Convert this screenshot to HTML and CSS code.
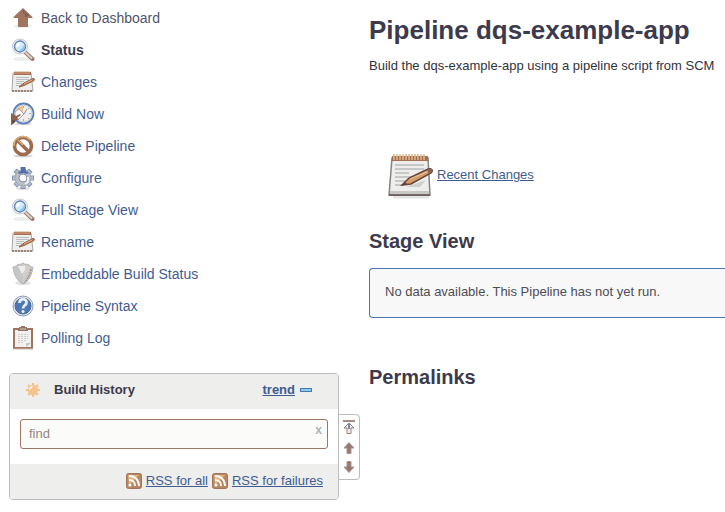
FILE: index.html
```
<!DOCTYPE html>
<html lang="en">
<head>
<meta charset="utf-8">
<meta name="viewport" content="width=device-width, initial-scale=1">
<title>dqs-example-app</title>
<link rel="stylesheet" href="styles.css">
</head>
<body>
<svg class="sprites" aria-hidden="true">
  <defs>
    <symbol id="search" viewBox="0 0 24 24">
      <ellipse cx="12" cy="21" rx="10" ry="2" fill="#eeeeec"/>
      <path d="M14.500 14.500l7 6.500" stroke="#957b72" stroke-width="4" stroke-linecap="round"/>
      <path d="M14 14l7 6.500" stroke="#d9d2ce" stroke-width="2"/>
      <circle cx="9" cy="8.500" r="7.500" fill="#f4f4f4" stroke="#c3c7ca"/>
      <circle cx="9" cy="8.500" r="5.500" fill="#cdeafb" stroke="#5d80bb" stroke-width="1.300"/>
      <path d="M5 9c0-3 2-5 5-5-1 3-2 5-5 5z" fill="#fff"/>
      <path d="M9 12c2 0 4-1 4-4" stroke="#78c2ec" stroke-width="1.500" fill="none"/>
    </symbol>
    <symbol id="notepad" viewBox="0 0 48 48">
      <path d="M6 46h36" stroke="#e4e4e4" stroke-width="3"/>
      <path d="M5 7h36l2 37H2z" fill="#eeeeec" stroke="#858483" stroke-width="1.500"/>
      <path d="M3 40h39v4H3z" fill="#c9c7c5"/>
      <path d="M2 44h41" stroke="#5c4b4b" stroke-width="1.500"/>
      <path d="M5 5h36v5H5z" fill="#a36f56"/>
      <path d="M7 3v6m3-6v6m3-6v6m3-6v6m3-6v6m3-6v6m3-6v6m3-6v6m3-6v6m3-6v6m3-6v6" stroke="#e3b586" stroke-width="1.500"/>
      <path d="M8 14h29M8 18h29M8 22h14M8 26h23M8 30h12M8 34h9" stroke="#b9babb" stroke-width="1.400"/>
      <path d="M19 36h14l6-7z" fill="#cfcfcd"/>
      <path d="M15 34l7-7 19-9c3-1 6 1 3 4L24 33z" fill="#d69b67" stroke="#65443e" stroke-width="1.500"/>
      <path d="M23 28l19-8" stroke="#f1c796"/>
      <path d="M14 35l4-4 2 2z" fill="#65443e"/>
      <path d="M40 19l2 4 3-2c1-3-1-4-3-3z" fill="#8a6155"/>
    </symbol>
    <symbol id="notepad-small" viewBox="0 0 24 24">
      <path d="M2 3h18l2 18H1z" fill="#eeeeec" stroke="#a5a5a4"/>
      <path d="M1 21h21" stroke="#936c5b" stroke-width="1.500" stroke-dasharray="2 1"/>
      <path d="M3 2h17v3H3z" fill="#a36f56"/>
      <path d="M4 1v3m2-3v3m2-3v3m2-3v3m2-3v3m2-3v3m2-3v3m2-3v3" stroke="#d8a778"/>
      <path d="M5 7.500h13M5 9.500h13M5 11.500h8M5 13.500h6M5 15.500h4" stroke="#bdbebe"/>
      <path d="M8 17l5-4 9-4.500c2 0 2 1.500 1 2L13 15.500z" fill="#bd8057" stroke="#8b5c47"/>
      <path d="M13 14l8-4" stroke="#e5b17f"/>
    </symbol>
    <symbol id="rss" viewBox="0 0 16 16">
      <rect x=".5" y=".5" width="15" height="15" rx="2" fill="#b88761" stroke="#a1745f"/>
      <path d="M2 2h11L3 12z" fill="#e7b47e"/>
      <circle cx="4" cy="12" r="1.600" fill="#fff"/>
      <path d="M3 7c4 0 6 2 6 6M3 3c6 0 10 4 10 10" fill="none" stroke="#fff" stroke-width="1.800"/>
    </symbol>
    <symbol id="arrow" viewBox="0 0 12 12">
      <path d="M6 .5L11 6H8v5.500H4V6H1z" fill="#9d7664" stroke="#a5958f"/>
      <path d="M6 2v9" stroke="#6e7ca6" stroke-width="2" stroke-dasharray="1 2"/>
    </symbol>
  </defs>
</svg>

<div class="page">
  <aside class="sidebar">
    <nav class="tasks">
      <a class="task" href="#">
        <svg class="icon" viewBox="0 0 24 24"><ellipse cx="12" cy="20" rx="9" ry="2" fill="#eee"/><path d="M12 2l9.500 9v1H17v9H7v-9H2.500v-1z" fill="#a0745f"/><path d="M12 4l6 6M12 6l4 4M14 10h3" fill="none" stroke="#604f50" stroke-dasharray="2 1"/></svg>
        <span class="home">Back to Dashboard</span>
      </a>
      <a class="task current" href="#"><svg class="icon"><use href="#search"/></svg><span>Status</span></a>
      <a class="task" href="#"><svg class="icon"><use href="#notepad-small"/></svg><span>Changes</span></a>
      <a class="task" href="#">
        <svg class="icon" viewBox="0 0 24 24"><ellipse cx="12" cy="22" rx="9" ry="1.500" fill="#ddd"/><circle cx="12.500" cy="11.500" r="10" fill="#eeeeec" stroke="#5c7fb8" stroke-width="1.800"/><circle cx="12.500" cy="11.500" r="8.500" fill="none" stroke="#c3c8cc"/><path d="M12 4v7H4c1-4 4-7 8-7z" fill="#f1c18b"/><path d="M12.500 4v2M20 11.500h-2M12.500 19v-2M18 6l-1 1M18 17l-1-1M7 6l1 1" stroke="#a5abb8"/><path d="M4 10l4-3 5 5-6 6-3-2z" fill="#fff" stroke="#aaa8a5"/><path d="M13 12l3-5" stroke="#8b8fa5"/><path d="M0 11l5 3 4-2 1 1-4 3 2 1-4 2-3 4H0z" fill="#8c624e"/><path d="M1 18l4 1-3 3z" fill="#51434a"/></svg>
        <span>Build Now</span>
      </a>
      <a class="task" href="#">
        <svg class="icon" viewBox="0 0 24 24"><ellipse cx="12" cy="22" rx="10" ry="1.500" fill="#d6d6d6"/><circle cx="12" cy="12" r="8.500" fill="#fff" stroke="#9c6c51" stroke-width="3.600"/><path d="M6 6l12 12" stroke="#9c6c51" stroke-width="3.600"/><path d="M3 12a9 9 0 0 1 16-6M7 6l5 5" fill="none" stroke="#e1b184" stroke-width="1.300"/></svg>
        <span>Delete Pipeline</span>
      </a>
      <a class="task" href="#">
        <svg class="icon" viewBox="0 0 24 24">
          <ellipse cx="12" cy="22.500" rx="7" ry="1.500" fill="#ddd"/>
          <path d="M12 1v22M1 12h22M4.200 4.200l15.600 15.600M19.800 4.200L4.200 19.800" stroke="#7d92b5" stroke-width="5"/>
          <path d="M12 2v20M2 12h20M5 5l14 14M19 5L5 19" stroke="#bcc0c6" stroke-width="3.400"/>
          <circle cx="12" cy="12" r="8" fill="#bcc0c6" stroke="#8999b3" stroke-width=".6"/>
          <path d="M10 1h4l1 4 3 2-2 1-4-1-4 1-1-2 3-1z" fill="#4f70ab"/>
          <circle cx="12" cy="12" r="4" fill="#fff" stroke="#8191ac"/>
          <path d="M17 11v5l-3 2" fill="none" stroke="#eee" stroke-width="2"/>
        </svg>
        <span>Configure</span>
      </a>
      <a class="task" href="#"><svg class="icon"><use href="#search"/></svg><span>Full Stage View</span></a>
      <a class="task" href="#"><svg class="icon"><use href="#notepad-small"/></svg><span>Rename</span></a>
      <a class="task" href="#">
        <svg class="icon" viewBox="0 0 24 24"><ellipse cx="12" cy="21" rx="8" ry="2" fill="#e1e1e1"/><path d="M2 5c3 0 4-2 5-3 2 1 3 0 5-1 2 1 3 2 5 1 1 1 2 3 5 3-1 8-4 14-10 17C6 19 3 13 2 5z" fill="#c5c6c5" stroke="#b5b6b5"/><path d="M12 2c2 1 4 2 5 1l2 3c-2 5-4 9-7 13z" fill="#d0d0ce"/><path d="M7 4h7v4l-3 4z" fill="#eeeeec"/><path d="M20 7c-1 6-3 10-7 14" fill="none" stroke="#a17e70" stroke-dasharray="2 1"/></svg>
        <span>Embeddable Build Status</span>
      </a>
      <a class="task" href="#">
        <svg class="icon" viewBox="0 0 24 24"><circle cx="12" cy="12" r="10" fill="#eee" stroke="#8b9bb6"/><circle cx="12" cy="12" r="8" fill="#4f76b6" stroke="#4468a4"/><path d="M8.500 9c0-5 7-5 7-.5 0 3-3.500 2.500-3.500 6" fill="none" stroke="#e8f2f8" stroke-width="2.800"/><circle cx="12" cy="17.500" r="1.600" fill="#e8f2f8"/></svg>
        <span>Pipeline Syntax</span>
      </a>
      <a class="task" href="#">
        <svg class="icon" viewBox="0 0 24 24"><path d="M2 2h20v21H2z" fill="#a1745f"/><path d="M4 4h16v17H4z" fill="#f1f1ef"/><path d="M8 3V1h2V0h4v1h2v2h1v2H7V3z" fill="#977469"/><path d="M9 3h6" stroke="#c9c4be"/><path d="M7 8.500h10M7 10.500h10M7 12.500h10M7 14.500h9M7 16.500h6" stroke="#ccc" stroke-dasharray="2 1"/><path d="M15 21v-4h5z" fill="#c9c5c1"/><path d="M2 23h20" stroke="#c7bcb5"/></svg>
        <span>Polling Log</span>
      </a>
    </nav>

    <section class="history">
      <header class="history-head">
        <svg class="sun" viewBox="0 0 16 16"><path d="M8 1v14M1 8h14M3 3l10 10M13 3L3 13" stroke="#f2c28b" stroke-width="2"/><circle cx="8" cy="8" r="5.200" fill="#f3c48e"/><path d="M4 8c0-3 2-4 4-4-1 2-2 3-4 4z" fill="#fff"/></svg>
        <h2 class="history-title">Build History</h2>
        <a class="trend" href="#">trend</a>
        <button class="collapse" type="button" aria-label="Collapse"></button>
      </header>
      <form class="search">
        <input class="find" type="text" placeholder="find" aria-label="find">
        <button class="clear" type="button">x</button>
      </form>
      <footer class="feeds">
        <svg class="rss"><use href="#rss"/></svg>
        <a href="#">RSS for all</a>
        <svg class="rss"><use href="#rss"/></svg>
        <a href="#">RSS for failures</a>
      </footer>
      <div class="pager">
        <button type="button" aria-label="Newest builds"><svg class="top" viewBox="0 0 12 14"><path d="M0 1h12" stroke="#a58c83" stroke-width="2"/><path d="M6 3l5 5H8v5.500H4V8H1z" fill="#eee" stroke="#9a7e77"/><path d="M6 4v5" stroke="#7585ac" stroke-width="2"/></svg></button>
        <button type="button" aria-label="Newer builds"><svg class="arrow"><use href="#arrow"/></svg></button>
        <button type="button" aria-label="Older builds"><svg class="arrow down"><use href="#arrow"/></svg></button>
      </div>
    </section>
  </aside>

  <main class="main">
    <h1>Pipeline dqs-example-app</h1>
    <p class="description">Build the dqs-example-app using a pipeline script from SCM</p>
    <div class="recent">
      <svg class="recent-icon"><use href="#notepad"/></svg>
      <a href="#">Recent Changes</a>
    </div>
    <h2>Stage View</h2>
    <div class="notice">No data available. This Pipeline has not yet run.</div>
    <h2>Permalinks</h2>
  </main>
</div>
</body>
</html>
```
FILE: styles.css
```
* {
  box-sizing: border-box;
}

body {
  margin: 0;
  background: #fff;
  color: #3d3a4b;
  font: 13px/20px "Liberation Sans", Arial, sans-serif;
}

a {
  color: #3f5c92;
}

button {
  padding: 0;
  border: 0;
  background: none;
}

svg {
  display: block;
  flex: none;
}

.sprites {
  position: absolute;
  width: 0;
  height: 0;
}

.page {
  display: flex;
  gap: 30px;
  padding: 2px 0 12px 9px;
}

.sidebar {
  flex: 0 0 330px;
}

.tasks {
  display: flex;
  flex-direction: column;
  padding-left: 2px;
}

.task {
  display: flex;
  align-items: center;
  gap: 6px;
  height: 32px;
  font-size: 14px;
  text-decoration: none;
}

.home {
  color: #505468;
}

.current {
  color: #3d3a4b;
  font-weight: bold;
}

.icon {
  width: 24px;
  height: 24px;
}

.history {
  position: relative;
  margin-top: 19px;
  border: 1px solid #bbb;
  border-radius: 4px;
}

.history-head {
  display: flex;
  align-items: center;
  height: 35px;
  padding: 0 26px 4px 15px;
  border-radius: 3px 3px 0 0;
  background: #eeeeec;
}

.sun {
  width: 16px;
  height: 16px;
  margin-right: 13px;
}

.history-title {
  flex: 1;
  margin: 0;
  font-size: 13px;
}

.trend {
  font-weight: bold;
}

.collapse {
  width: 12px;
  height: 4px;
  margin-left: 5px;
  border: 1px solid #4a78b6;
  background: #8ecbf0;
}

.search {
  position: relative;
  padding: 10px 10px 15px;
}

.find {
  display: block;
  width: 100%;
  height: 30px;
  padding: 0 24px 2px 8px;
  border: 1px solid #9c7563;
  border-radius: 3px;
  background: #fbfbfa;
  color: #3d3a4b;
  font: inherit;
}

.find::placeholder {
  color: #94857f;
  opacity: 1;
}

.clear {
  position: absolute;
  top: 13px;
  right: 16px;
  color: #aab4ba;
  font: bold 12px/16px "Liberation Sans", Arial, sans-serif;
}

.feeds {
  display: flex;
  align-items: center;
  justify-content: flex-end;
  gap: 4px;
  height: 35px;
  padding: 0 15px 2px 0;
  border-radius: 0 0 3px 3px;
  background: #eeeeec;
}

.rss {
  width: 16px;
  height: 16px;
}

.pager {
  position: absolute;
  top: 40px;
  left: 100%;
  display: flex;
  flex-direction: column;
  align-items: center;
  justify-content: space-between;
  width: 22px;
  height: 66px;
  padding: 5px 0 6px;
  border: 1px solid #bbb;
  border-radius: 0 4px 4px 0;
  background: #fff;
}

.top {
  width: 12px;
  height: 14px;
}

.arrow {
  width: 12px;
  height: 12px;
}

.down {
  transform: rotate(180deg);
}

.main {
  flex: 1;
  min-width: 0;
}

h1 {
  margin: 12px 0 0;
  font-size: 26px;
  line-height: 32px;
}

.description {
  margin: 10px 0 0;
  color: #32323b;
}

.recent {
  display: flex;
  align-items: center;
  gap: 2px;
  margin: 75px 0 0 18px;
}

.recent-icon {
  width: 48px;
  height: 48px;
}

.main h2 {
  margin: 30px 0 15px;
  font-size: 20px;
  line-height: 24px;
}

.notice {
  min-height: 50px;
  margin-bottom: 47px;
  padding: 13px 15px 15px;
  border: 1px solid #4b73b5;
  border-right: 0;
  border-radius: 4px 0 0 4px;
  background: #f8f8f8;
  color: #4c4d55;
}
```
